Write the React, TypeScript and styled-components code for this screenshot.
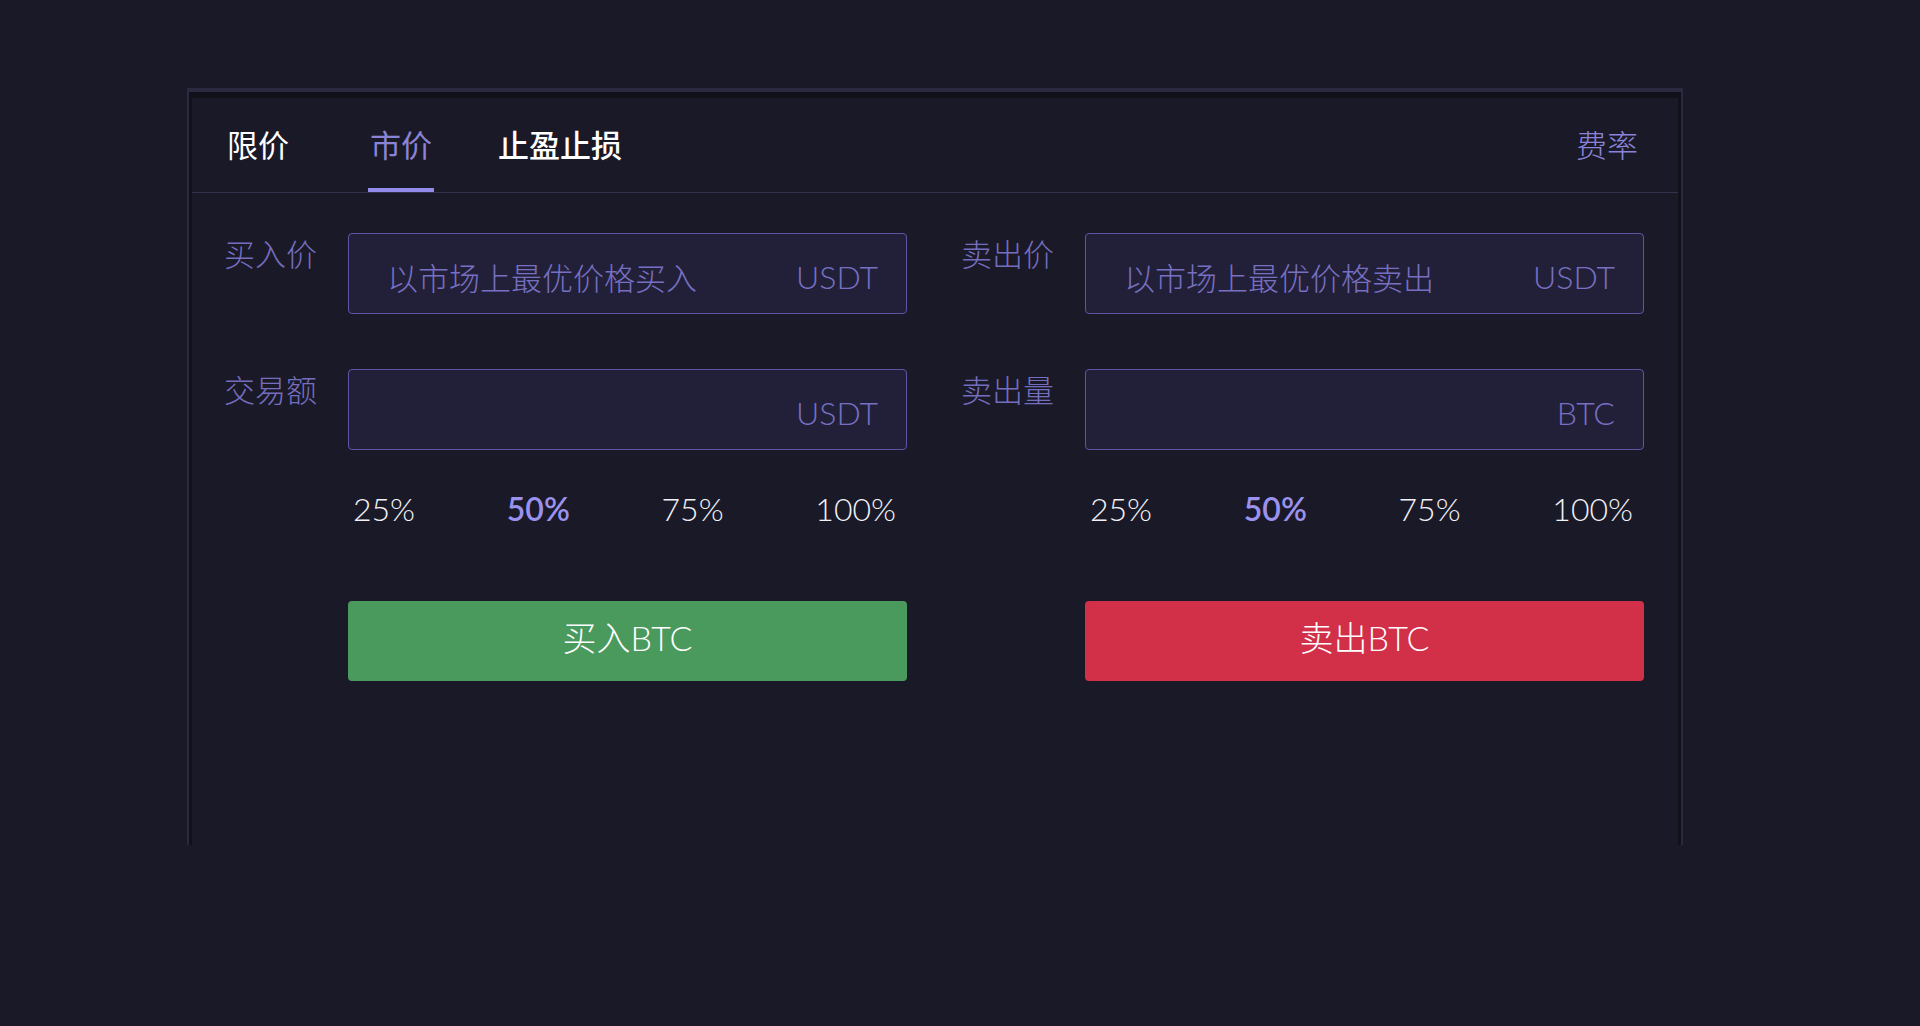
import React, { useState } from 'react';
import styled, { createGlobalStyle } from 'styled-components';

const GlobalStyle = createGlobalStyle`
  html, body {
    margin: 0;
    padding: 0;
    background: #1a1927;
  }
  body {
    font-family: "Lato", "Noto Sans CJK SC", sans-serif;
  }
`;

const Page = styled.div`
  display: flex;
  padding: 88px 0 0 187px;
  min-height: 938px;
`;

const Panel = styled.div`
  width: 1496px;
  height: 757px;
  box-sizing: border-box;
  border-style: solid;
  border-color: #2b2940;
  border-width: 4px 2px 0 2px;
  box-shadow: inset 0 6px 0 #12111a, inset 3px 0 0 #12111a, inset -3px 0 0 #12111a;
  padding: 6px 3px 0 3px;
  display: flex;
  flex-direction: column;
`;

const Header = styled.div`
  height: 94px;
  display: flex;
  align-items: stretch;
  justify-content: space-between;
  padding: 0 40px 0 33px;
  border-bottom: 1px solid #35324b;
`;

const Tabs = styled.div`
  display: flex;
  align-items: stretch;
`;

const Tab = styled.div<{ $active?: boolean; $bold?: boolean; $gap?: number }>`
  display: flex;
  align-items: center;
  box-sizing: border-box;
  padding: 0 2px;
  margin-left: ${(p) => p.$gap ?? 0}px;
  font-size: 31px;
  font-weight: ${(p) => (p.$bold ? 500 : 400)};
  color: ${(p) => (p.$active ? '#8a83d6' : '#ffffff')};
  border-bottom: 4px solid ${(p) => (p.$active ? '#928bea' : 'transparent')};
  cursor: pointer;
`;

const FeeLink = styled.div`
  display: flex;
  align-items: center;
  padding-bottom: 4px;
  font-size: 31px;
  font-weight: 300;
  color: #8a83d8;
  cursor: pointer;
`;

const Body = styled.div`
  display: flex;
  gap: 54px;
  padding: 40px 0 0 32px;
`;

const Column = styled.div`
  display: flex;
  flex-direction: column;
  width: 683px;
`;

const Field = styled.div`
  display: flex;
  align-items: flex-start;
  & + & {
    margin-top: 55px;
  }
`;

const Label = styled.div`
  width: 124px;
  flex-shrink: 0;
  padding-top: 3px;
  font-size: 31px;
  font-weight: 300;
  color: #756ebf;
  line-height: 1.2;
`;

const InputBox = styled.div`
  width: 559px;
  height: 81px;
  box-sizing: border-box;
  display: flex;
  align-items: center;
  justify-content: space-between;
  padding: 6px 28px 0 38px;
  background: #222039;
  border: 1px solid #5b55a3;
  border-radius: 4px;
`;

const Placeholder = styled.span`
  font-size: 31px;
  font-weight: 300;
  color: #7770c2;
`;

const Unit = styled.span`
  margin-left: auto;
  font-size: 32px;
  font-weight: 300;
  color: #7770c2;
`;

const Percents = styled.div`
  display: flex;
  justify-content: space-between;
  margin: 37px 0 0 124px;
  width: 559px;
  box-sizing: border-box;
  padding: 0 11px 0 5px;
  height: 44px;
  line-height: 44px;
`;

const Percent = styled.span<{ $active?: boolean }>`
  font-size: 32px;
  font-weight: ${(p) => (p.$active ? 600 : 300)};
  color: ${(p) => (p.$active ? '#9a92ee' : '#f2f1f7')};
  cursor: pointer;
`;

const ActionButton = styled.button<{ $side: 'buy' | 'sell' }>`
  margin: 70px 0 0 124px;
  width: 559px;
  height: 80px;
  padding: 0 0 10px;
  border: none;
  border-radius: 4px;
  background: ${(p) => (p.$side === 'buy' ? '#4a9a5e' : '#d22f48')};
  color: #ffffff;
  font-family: inherit;
  font-size: 34px;
  font-weight: 300;
  cursor: pointer;
`;

const percents = ['25%', '50%', '75%', '100%'];

interface SideProps {
  side: 'buy' | 'sell';
}

const OrderSide: React.FC<SideProps> = ({ side }) => {
  const [pick, setPick] = useState(1);
  const buy = side === 'buy';

  return (
    <Column>
      <Field>
        <Label>{buy ? '买入价' : '卖出价'}</Label>
        <InputBox>
          <Placeholder>{buy ? '以市场上最优价格买入' : '以市场上最优价格卖出'}</Placeholder>
          <Unit>USDT</Unit>
        </InputBox>
      </Field>
      <Field>
        <Label>{buy ? '交易额' : '卖出量'}</Label>
        <InputBox>
          <Unit>{buy ? 'USDT' : 'BTC'}</Unit>
        </InputBox>
      </Field>
      <Percents>
        {percents.map((p, i) => (
          <Percent key={p} $active={i === pick} onClick={() => setPick(i)}>
            {p}
          </Percent>
        ))}
      </Percents>
      <ActionButton $side={side}>{buy ? '买入BTC' : '卖出BTC'}</ActionButton>
    </Column>
  );
};

const App: React.FC = () => {
  const [tab, setTab] = useState(1);

  return (
    <>
      <GlobalStyle />
      <Page>
        <Panel>
          <Header>
            <Tabs>
              <Tab $active={tab === 0} onClick={() => setTab(0)}>限价</Tab>
              <Tab $active={tab === 1} $gap={77} onClick={() => setTab(1)}>市价</Tab>
              <Tab $active={tab === 2} $gap={62} $bold onClick={() => setTab(2)}>止盈止损</Tab>
            </Tabs>
            <FeeLink>费率</FeeLink>
          </Header>
          <Body>
            <OrderSide side="buy" />
            <OrderSide side="sell" />
          </Body>
        </Panel>
      </Page>
    </>
  );
};

export default App;
